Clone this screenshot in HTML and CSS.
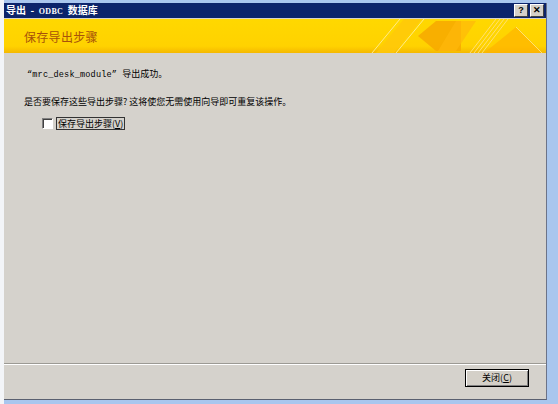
FILE: index.html
```html
<!DOCTYPE html>
<html lang="zh">
<head>
<meta charset="utf-8">
<link rel="stylesheet" href="styles.css">
<title>导出 - ODBC 数据库</title>
</head>
<body>
<div class="desk">
  <div class="win">
    <div class="titlebar">
      <span class="title">导出  -  <span class="odbc">ODBC</span>  数据库</span>
      <div class="caps">
        <span class="cap">?</span>
        <span class="cap cap-x">✕</span>
      </div>
    </div>
    <div class="banner">
      <span class="banner-title">保存导出步骤</span>
      <svg class="deco" width="180" height="34" viewBox="0 0 180 34">
        <polygon points="10,34 38,0 56,0 28,34" fill="#ffc80a" opacity="0.8"/>
        <line x1="6" y1="34" x2="34" y2="0" stroke="#ffe98a" stroke-width="1"/>
        <line x1="30" y1="34" x2="58" y2="0" stroke="#ffe98a" stroke-width="1"/>
        <polygon points="52,17 70,2 95,2 95,32 70,32" fill="#f7a800" opacity="0.85"/>
        <polygon points="90,2 110,2 90,32 72,32" fill="#ffb80a" opacity="0.7"/>
        <line x1="104" y1="34" x2="130" y2="0" stroke="#ffe070" stroke-width="1"/>
        <line x1="108" y1="34" x2="134" y2="0" stroke="#ffe070" stroke-width="1"/>
        <line x1="112" y1="34" x2="138" y2="0" stroke="#ffe070" stroke-width="1"/>
        <line x1="116" y1="34" x2="142" y2="0" stroke="#ffe070" stroke-width="1"/>
        <polygon points="118,34 150,8 176,34" fill="#ffb400" opacity="0.7"/>
        <line x1="150" y1="8" x2="176" y2="34" stroke="#ffe070" stroke-width="1"/>
      </svg>
    </div>
    <div class="content">
      <p class="line1"><span class="mono">“mrc_desk_module”</span> 导出成功。</p>
      <p class="line2">是否要保存这些导出步骤? 这将使您无需使用向导即可重复该操作。</p>
      <label class="chk"><span class="box"></span><span class="chk-label">保存导出步骤(<u>V</u>)</span></label>
    </div>
    <div class="footer">
      <button class="btn">关闭(<u>C</u>)</button>
    </div>
  </div>
</div>
</body>
</html>
```
FILE: styles.css
```css
html, body {
  margin: 0;
  padding: 0;
  width: 558px;
  height: 404px;
  overflow: hidden;
  background: #a9c6ee;
}
.desk {
  height: 404px;
  padding: 3px 0 0 4px;
  box-sizing: border-box;
  background: linear-gradient(to right, #f3f5f8 0, #f3f5f8 4px, #a9c6ee 4px);
}
.win {
  width: 542px;
  height: 396px;
  background: #d5d2cc;
  border-right: 1px solid #6b7388;
  border-bottom: 1px solid #5a6070;
  display: flex;
  flex-direction: column;
  font-family: "Noto Sans CJK SC", "Liberation Sans", sans-serif;
  font-size: 9px;
  color: #000;
}
.titlebar {
  height: 15px;
  background: #0c246b;
  display: flex;
  align-items: center;
  justify-content: space-between;
  padding: 0 2px 0 2px;
}
.title {
  color: #fff;
  font-weight: bold;
  font-size: 10px;
  line-height: 13px;
  white-space: pre;
}
.odbc { font-size: 8px; font-family: "Liberation Serif", serif; letter-spacing: 0.3px; }
.caps { display: flex; gap: 2px; }
.cap {
  width: 12px;
  height: 11px;
  background: #d4d0c8;
  border: 1px solid;
  border-color: #fff #404040 #404040 #fff;
  font-size: 9px;
  font-weight: bold;
  line-height: 11px;
  text-align: center;
  font-family: "Liberation Sans", sans-serif;
}
.banner {
  height: 34px;
  margin-top: 1px;
  background: linear-gradient(to bottom, #ffd800 0, #ffd200 80%, #f5b800 100%);
  display: flex;
  align-items: center;
  justify-content: space-between;
  padding-left: 20px;
  overflow: hidden;
}
.banner-title {
  color: #a8520a;
  font-size: 12px;
  letter-spacing: 0.3px;
}
.deco { flex: none; }
.content {
  flex: 1;
  padding: 15px 0 0 20px;
}
.content p { margin: 0; line-height: 12px; }
.line1 { padding-left: 3px; }
.line2 { margin-top: 15px !important; }
.mono { font-family: "Liberation Mono", monospace; font-size: 8.5px; letter-spacing: 0.2px; margin-right: 3px; }
.chk {
  display: flex;
  align-items: center;
  gap: 3px;
  margin: 9px 0 0 18px;
}
.box {
  width: 9px;
  height: 9px;
  background: #fff;
  border: 1px solid;
  border-color: #808080 #fff #fff #808080;
  box-shadow: inset 1px 1px 0 #404040;
}
.chk-label {
  border: 1px solid #333;
  padding: 0 1px;
  line-height: 11px;
}
.footer {
  height: 30px;
  border-top: 1px solid #9c9a94;
  box-shadow: inset 0 1px 0 #fff;
  display: flex;
  justify-content: flex-end;
  align-items: flex-start;
  padding: 5px 17px 0 0;
}
.btn {
  width: 64px;
  height: 18px;
  background: #d4d0c8;
  border: 1px solid #000;
  box-shadow: inset 1px 1px 0 #fff, inset -1px -1px 0 #808080;
  font-family: "Noto Sans CJK SC", sans-serif;
  font-size: 9px;
  padding: 0;
  line-height: 14px;
}
```
